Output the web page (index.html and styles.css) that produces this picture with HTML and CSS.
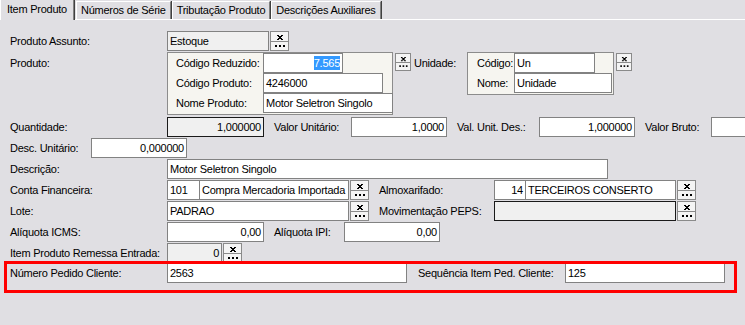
FILE: index.html
```html
<!DOCTYPE html>
<html lang="pt-BR">
<head>
  <meta charset="UTF-8">
  <title>Item Produto</title>
  <link rel="stylesheet" href="styles.css">
</head>
<body>
  <svg width="0" height="0" class="defs">
    <symbol id="lk" viewBox="0 0 17 18">
      <path d="M6 3h2v1h-2zM10 3h2v1h-2zM7 4h4v1h-4zM8 5h2v1h-2zM7 6h4v1h-4zM6 7h2v1h-2zM10 7h2v1h-2z" fill="#000"></path>
      <rect x="4" y="13" width="2" height="2" fill="#000"></rect>
      <rect x="8" y="13" width="2" height="2" fill="#000"></rect>
      <rect x="12" y="13" width="2" height="2" fill="#000"></rect>
    </symbol>
  </svg>

  <div class="tabs">
    <div class="tab active">Item Produto</div>
    <div class="tab">Números de Série</div>
    <div class="tab">Tributação Produto</div>
    <div class="tab">Descrições Auxiliares</div>
  </div>

  <div class="form">
    <div class="row">
      <div class="lbl w157">Produto Assunto:</div>
      <div class="fld ro" style="width:102px">Estoque</div>
      <div class="lk"><svg><use href="#lk"></use></svg></div>
    </div>

    <div class="row tall">
      <div class="lbl w157 top">Produto:</div>
      <div class="group prod">
        <div class="grow">
          <div class="lbl w87">Código Reduzido:</div>
          <div class="fld num" style="width:80px"><span class="sel">7.565</span></div>
        </div>
        <div class="grow">
          <div class="lbl w87">Código Produto:</div>
          <div class="fld" style="width:120px">4246000</div>
        </div>
        <div class="grow">
          <div class="lbl w87">Nome Produto:</div>
          <div class="fld" style="width:130px">Motor Seletron Singolo</div>
        </div>
      </div>
      <div class="lk small"><svg><use href="#lk"></use></svg></div>
      <div class="lbl top unid">Unidade:</div>
      <div class="group unit">
        <div class="grow">
          <div class="lbl w37">Código:</div>
          <div class="fld" style="width:81px">Un</div>
        </div>
        <div class="grow">
          <div class="lbl w37">Nome:</div>
          <div class="fld" style="width:98px">Unidade</div>
        </div>
      </div>
      <div class="lk small"><svg><use href="#lk"></use></svg></div>
    </div>

    <div class="row">
      <div class="lbl w157">Quantidade:</div>
      <div class="fld num dis" style="width:97px">1,000000</div>
      <div class="lbl sp" style="width:77px">Valor Unitário:</div>
      <div class="fld num" style="width:96px">1,0000</div>
      <div class="lbl sp" style="width:82px">Val. Unit. Des.:</div>
      <div class="fld num" style="width:96px">1,000000</div>
      <div class="lbl sp" style="width:66px">Valor Bruto:</div>
      <div class="fld" style="width:60px"></div>
    </div>

    <div class="row">
      <div class="lbl w81">Desc. Unitário:</div>
      <div class="fld num" style="width:96px">0,000000</div>
    </div>

    <div class="row">
      <div class="lbl w157">Descrição:</div>
      <div class="fld" style="width:441px">Motor Seletron Singolo</div>
    </div>

    <div class="row">
      <div class="lbl w157">Conta Financeira:</div>
      <div class="fld" style="width:33px">101</div>
      <div class="fld join" style="width:150px">Compra Mercadoria Importada</div>
      <div class="lk"><svg><use href="#lk"></use></svg></div>
      <div class="lbl sp" style="width:115px">Almoxarifado:</div>
      <div class="fld num" style="width:32px">14</div>
      <div class="fld join" style="width:151px">TERCEIROS CONSERTO</div>
      <div class="lk"><svg><use href="#lk"></use></svg></div>
    </div>

    <div class="row">
      <div class="lbl w157">Lote:</div>
      <div class="fld" style="width:182px">PADRAO</div>
      <div class="lk"><svg><use href="#lk"></use></svg></div>
      <div class="lbl sp" style="width:115px">Movimentação PEPS:</div>
      <div class="fld dis" style="width:182px"></div>
      <div class="lk"><svg><use href="#lk"></use></svg></div>
    </div>

    <div class="row">
      <div class="lbl w157">Alíquota ICMS:</div>
      <div class="fld num" style="width:97px">0,00</div>
      <div class="lbl sp" style="width:70px">Alíquota IPI:</div>
      <div class="fld num" style="width:96px">0,00</div>
    </div>

    <div class="row">
      <div class="lbl w157">Item Produto Remessa Entrada:</div>
      <div class="fld num ro" style="width:55px">0</div>
      <div class="lk"><svg><use href="#lk"></use></svg></div>
    </div>

    <div class="row marked">
      <div class="lbl w157">Número Pedido Cliente:</div>
      <div class="fld" style="width:240px">2563</div>
      <div class="lbl sp2" style="width:147px">Sequência Item Ped. Cliente:</div>
      <div class="fld" style="width:160px">125</div>
    </div>
  </div>
</body>
</html>
```

FILE: styles.css
```css
* {
  margin: 0;
  padding: 0;
  box-sizing: border-box;
}

body {
  width: 745px;
  height: 325px;
  overflow: hidden;
  background-color: #e0dfe3;
  font-family: 'Liberation Sans', Arial, sans-serif;
  font-size: 11px;
  letter-spacing: -0.25px;
  color: #000;
}

.defs {
  position: absolute;
}

/* tab strip */
.tabs {
  display: flex;
  align-items: flex-end;
  height: 20px;
  border-bottom: 1px solid #fff;
}

.tab {
  height: 18px;
  line-height: 17px;
  padding: 0 4px 0 4px;
  margin-left: 1px;
  border-top: 1px solid #fff;
  border-left: 1px solid #fff;
  border-right: 1px solid #808080;
  box-shadow: 1px 0 0 #404040;
  white-space: nowrap;
}

.tab.active {
  height: 21px;
  line-height: 19px;
  padding: 0 6px;
  margin-left: 0;
  margin-bottom: -1px;
  margin-right: 1px;
  background-color: #e0dfe3;
}

/* form */
.form {
  padding: 11px 0 0 10px;
}

.row {
  display: flex;
  align-items: flex-start;
  height: 21px;
  white-space: nowrap;
}

.row.tall {
  height: 65px;
}

.lbl {
  flex-shrink: 0;
  height: 20px;
  line-height: 20px;
}

.lbl.top {
  margin-top: 1px;
}

.w157 { width: 157px; }
.w87 { width: 87px; }
.w81 { width: 81px; }
.w37 { width: 37px; }

.sp {
  margin-left: 10px;
}

.sp2 {
  margin-left: 11px;
}

.unid {
  margin-left: 3px;
  width: 53px;
}

.fld {
  flex-shrink: 0;
  height: 20px;
  line-height: 18px;
  padding: 0 2px;
  background-color: #fff;
  border: 1px solid #828282;
  overflow: hidden;
}

.fld.join {
  margin-left: -1px;
}

.fld.num {
  text-align: right;
}

.fld.ro {
  background-color: #f0f0f0;
}

.fld.dis {
  background-color: #f0f0f0;
  border-color: #1a1a1a;
}

.sel {
  background-color: #3399ff;
  color: #fff;
  padding: 1px 0;
}

/* lookup button: clear (x) and search (...) */
.lk {
  flex-shrink: 0;
  width: 19px;
  height: 20px;
  margin-left: 1px;
  background-color: #f4f4f4;
  border: 1px solid #8a8a8a;
  position: relative;
}

.lk::after {
  content: "";
  position: absolute;
  left: 0;
  right: 0;
  top: 9px;
  height: 1px;
  background: #8a8a8a;
}

.lk svg {
  display: block;
  width: 100%;
  height: 100%;
}

.lk.small {
  width: 16px;
  height: 18px;
  margin-left: 2px;
  margin-top: 1px;
}

.lk.small::after {
  top: 8px;
}

/* grouped sub-forms */
.group {
  flex-shrink: 0;
  background-color: #f6f5f0;
  border: 1px solid #8c8c8c;
}

.group.prod {
  width: 226px;
  height: 63px;
  padding-left: 8px;
}

.group.unit {
  width: 147px;
  height: 43px;
  padding-left: 9px;
}

.grow {
  display: flex;
  height: 20px;
}

/* highlight box drawn over the last row */
.marked {
  position: relative;
  margin-top: -1px;
}

.marked::after {
  content: "";
  position: absolute;
  left: -6px;
  top: -2px;
  width: 727px;
  height: 26px;
  border: 3px solid #ff0000;
}
```
